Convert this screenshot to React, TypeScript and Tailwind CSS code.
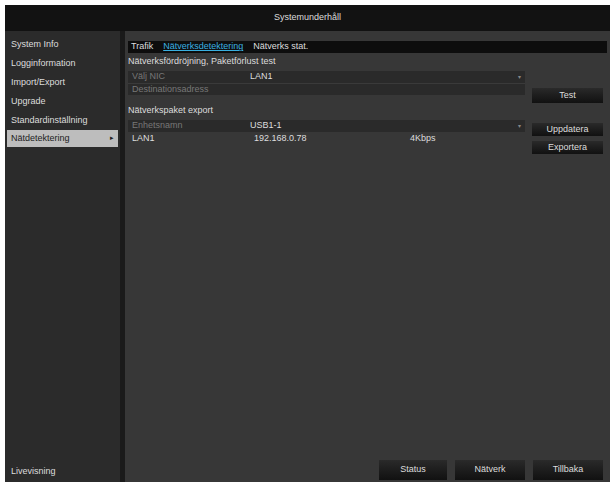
export default function App() {
  const btn = "flex items-center justify-center bg-gradient-to-b from-[#2a2a2a] to-[#111] text-[#ddd] text-[9px]";
  return (
    <div className="w-[615px] h-[484px] bg-white pt-[5px] px-[5px] pb-[2px]" style={{ fontFamily: '"Liberation Sans", Arial, sans-serif' }}>
      <div className="h-full flex flex-col bg-[#1a1a1a]">
        <div className="h-[26px] bg-[#121212] flex items-center justify-center text-[#ddd] text-[9px]">Systemunderhåll</div>
        <div className="flex-1 flex gap-[5px]">
          <div className="w-[115px] bg-[#2b2b2b] flex flex-col pt-[4px] text-[#ddd] text-[9px]">
            {["System Info", "Logginformation", "Import/Export", "Upgrade", "Standardinställning"].map(t => (
              <div key={t} className="h-[19px] flex items-center px-[6px]">{t}</div>
            ))}
            <div className="h-[17px] mx-[2px] bg-[#bdbdbd] text-[#222] flex items-center justify-between px-[4px]"><span>Nätdetektering</span><span className="text-[7px]">▸</span></div>
            <div className="flex-1" />
            <div className="h-[20px] flex items-center px-[6px]">Livevisning</div>
          </div>
          <div className="flex-1 bg-[#373737] flex flex-col px-[3px] pt-[10px] pb-[2px] text-[9px] text-[#ddd]">
            <div className="h-[12px] bg-[#0d0d0d] flex items-center gap-[10px] px-[3px]">
              <span>Trafik</span>
              <span className="text-[#3ab0e0] underline">Nätverksdetektering</span>
              <span>Nätverks stat.</span>
            </div>
            <div className="flex">
              <div className="flex-1 flex flex-col">
                <div className="h-[18px] flex items-center">Nätverksfördröjning, Paketförlust test</div>
                <div className="h-[12px] bg-[#2a2a2a] flex items-center justify-between px-[4px]"><span className="flex"><span className="w-[118px] text-[#777]">Välj NIC</span><span>LAN1</span></span><span className="text-[6px] text-[#888]">▾</span></div>
                <div className="h-[12px] bg-[#2a2a2a] flex items-center px-[4px] border-t border-[#3a3a3a]"><span className="text-[#777]">Destinationsadress</span></div>
                <div className="h-[24px] flex items-end pb-[2px]">Nätverkspaket export</div>
                <div className="h-[12px] mt-[1px] bg-[#2a2a2a] flex items-center justify-between px-[4px]"><span className="flex"><span className="w-[118px] text-[#777]">Enhetsnamn</span><span>USB1-1</span></span><span className="text-[6px] text-[#888]">▾</span></div>
                <div className="h-[14px] flex items-center px-[4px]"><span className="w-[122px]">LAN1</span><span className="w-[156px]">192.168.0.78</span><span>4Kbps</span></div>
              </div>
              <div className="w-[82px] flex flex-col pl-[7px] pr-[4px]">
                <div className={btn + " h-[15px] mt-[35px]"}>Test</div>
                <div className={btn + " h-[13px] mt-[20px]"}>Uppdatera</div>
                <div className={btn + " h-[13px] mt-[5px]"}>Exportera</div>
              </div>
            </div>
            <div className="flex-1" />
            <div className="flex justify-end gap-[8px] pr-[4px]">
              <div className={btn + " w-[68px] h-[20px]"}>Status</div>
              <div className={btn + " w-[70px] h-[20px]"}>Nätverk</div>
              <div className={btn + " w-[70px] h-[20px]"}>Tillbaka</div>
            </div>
          </div>
        </div>
      </div>
    </div>
  );
}
